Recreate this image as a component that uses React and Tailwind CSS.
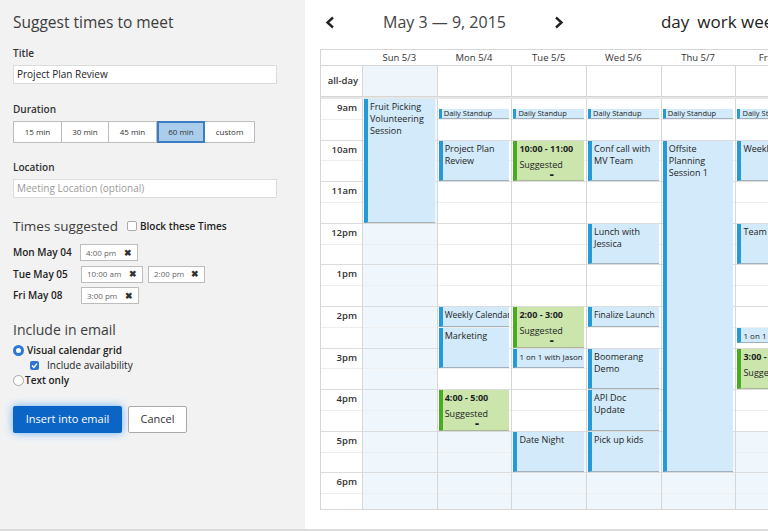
import React from 'react';

const HOUR = 41.6;
const days = ['Sun 5/3', 'Mon 5/4', 'Tue 5/5', 'Wed 5/6', 'Thu 5/7', 'Fri 5/8', 'Sat 5/9'];
const hours = ['9am', '10am', '11am', '12pm', '1pm', '2pm', '3pm', '4pm', '5pm', '6pm'];

const events = [
  { d: 0, s: 9, e: 12, t: 'Fruit Picking Volunteering Session' },
  { d: 1, s: 9.25, e: 9.5, t: 'Daily Standup', tiny: true },
  { d: 2, s: 9.25, e: 9.5, t: 'Daily Standup', tiny: true },
  { d: 3, s: 9.25, e: 9.5, t: 'Daily Standup', tiny: true },
  { d: 4, s: 9.25, e: 9.5, t: 'Daily Standup', tiny: true },
  { d: 5, s: 9.25, e: 9.5, t: 'Daily Standup', tiny: true },
  { d: 1, s: 10, e: 11, t: 'Project Plan Review' },
  { d: 1, s: 14, e: 14.5, t: 'Weekly Calendar', nowrap: true },
  { d: 1, s: 14.5, e: 15.5, t: 'Marketing' },
  { d: 1, s: 16, e: 17, g: '4:00 - 5:00' },
  { d: 2, s: 10, e: 11, g: '10:00 - 11:00' },
  { d: 2, s: 14, e: 15, g: '2:00 - 3:00' },
  { d: 2, s: 15, e: 15.5, t: '1 on 1 with Jason', nowrap: true, small: true },
  { d: 2, s: 17, e: 18, t: 'Date Night' },
  { d: 3, s: 10, e: 11, t: 'Conf call with MV Team' },
  { d: 3, s: 12, e: 13, t: 'Lunch with Jessica' },
  { d: 3, s: 14, e: 14.5, t: 'Finalize Launch', nowrap: true },
  { d: 3, s: 15, e: 16, t: 'Boomerang Demo' },
  { d: 3, s: 16, e: 17, t: 'API Doc Update' },
  { d: 3, s: 17, e: 18, t: 'Pick up kids' },
  { d: 4, s: 10, e: 18, t: 'Offsite Planning Session 1' },
  { d: 5, s: 10, e: 11, t: 'Weekly' },
  { d: 5, s: 12, e: 13, t: 'Team' },
  { d: 5, s: 14.5, e: 14.9, t: '1 on 1', nowrap: true, small: true },
  { d: 5, s: 15, e: 16, g: '3:00 - 4:00' },
];

function Chip({ label, w }) {
  return (
    <div
      className="h-[17px] bg-white border border-[#bdbdbd] flex items-center justify-between pl-[5px] pr-[5px]"
      style={{ width: w }}
    >
      <span className="text-[8px] text-[#666]">{label}</span>
      <span className="text-[9px] font-bold text-[#333]">✖</span>
    </div>
  );
}

function Event({ ev }) {
  const top = (ev.s - 9) * HOUR;
  const height = (ev.e - ev.s) * HOUR - 1;
  if (ev.g) {
    return (
      <div
        className="absolute left-[1px] right-[2px] bg-[#cbe5ad] border-l-[4px] border-[#46ad1f] border-b border-b-[#a6b898] pl-[2px] pt-[2px] text-[#1e1e1e] overflow-hidden"
        style={{ top, height }}
      >
        <div className="text-[9px] font-bold leading-[12px]">{ev.g}</div>
        <div className="text-[9px] leading-[11px] mt-[4px]">Suggested</div>
        <div className="mt-[1px] text-[7px] leading-[8px] text-center font-bold">=</div>
      </div>
    );
  }
  return (
    <div
      className={`absolute left-[1px] right-[2px] bg-[#d2eaf9] border-[#259ad8] border-b border-b-[#9fb0bc] text-[#1e1e1e] overflow-hidden ${
        ev.tiny ? 'border-l-[3px] pl-[2px]' : 'border-l-[4px] pl-[2px] pt-[2px]'
      }`}
      style={{ top, height }}
    >
      <div
        className={
          ev.tiny
            ? 'text-[7.5px] leading-[9px] whitespace-nowrap'
            : ev.small
            ? 'text-[8px] leading-[12px] whitespace-nowrap'
            : ev.nowrap
            ? 'text-[8.5px] leading-[12px] whitespace-nowrap'
            : 'text-[9px] leading-[12px] pr-[2px]'
        }
      >
        {ev.t}
      </div>
    </div>
  );
}

function Chevron({ dir }) {
  return (
    <svg width="10" height="13" viewBox="0 0 10 13" className="shrink-0">
      <polyline
        points={dir === 'left' ? '8,1.5 2.5,6.5 8,11.5' : '2,1.5 7.5,6.5 2,11.5'}
        fill="none"
        stroke="#222"
        strokeWidth="2.4"
      />
    </svg>
  );
}

export default function App() {
  return (
    <div className="w-[768px] h-[531px] flex overflow-hidden border-b-2 border-[#dcdcdc] font-['Open_Sans',sans-serif] text-[#333]">
      {/* left form */}
      <div className="w-[305px] shrink-0 bg-[#f2f2f2] px-[13px] pt-[12px]">
        <h1 className="text-[15.5px] leading-[20px] text-[#3c3c3c]">Suggest times to meet</h1>

        <div className="mt-[15px] text-[10px] leading-[12px] font-semibold">Title</div>
        <div className="mt-[6px] w-[264px] h-[19px] bg-white border border-[#dcdcdc] flex items-center px-[3px] text-[10px] text-[#222]">
          Project Plan Review
        </div>

        <div className="mt-[19px] text-[10px] leading-[12px] font-semibold">Duration</div>
        <div className="mt-[6px] flex h-[22px] text-[8px] text-[#333]">
          <div className="w-[49px] bg-white border border-[#bdbdbd] flex items-center justify-center">15 min</div>
          <div className="w-[47px] bg-white border-y border-r border-[#bdbdbd] flex items-center justify-center">30 min</div>
          <div className="w-[48px] bg-white border-y border-r border-[#bdbdbd] flex items-center justify-center">45 min</div>
          <div className="w-[48px] bg-[#a9cdeb] border-2 border-[#3b7dc2] flex items-center justify-center">60 min</div>
          <div className="w-[50px] bg-white border-y border-r border-[#bdbdbd] flex items-center justify-center">custom</div>
        </div>

        <div className="mt-[18px] text-[10px] leading-[12px] font-semibold">Location</div>
        <div className="mt-[6px] w-[264px] h-[19px] bg-white border border-[#dcdcdc] flex items-center px-[3px] text-[10px] text-[#9a9a9a]">
          Meeting Location (optional)
        </div>

        <div className="mt-[19px] flex items-center h-[18px]">
          <span className="text-[13.5px] leading-[18px] text-[#3c3c3c]">Times suggested</span>
          <span className="ml-[9px] w-[10px] h-[10px] bg-white border border-[#aaa] rounded-[2px]"></span>
          <span className="ml-[3px] text-[10px] font-semibold text-[#222]">Block these Times</span>
        </div>

        <div className="mt-[9px] flex flex-col gap-[4.5px]">
          <div className="flex items-center">
            <span className="w-[67px] text-[10px] font-semibold text-[#222]">Mon May 04</span>
            <Chip label="4:00 pm" w={58} />
          </div>
          <div className="flex items-center">
            <span className="w-[68px] text-[10px] font-semibold text-[#222]">Tue May 05</span>
            <Chip label="10:00 am" w={62} />
            <div className="w-[5px]"></div>
            <Chip label="2:00 pm" w={57} />
          </div>
          <div className="flex items-center">
            <span className="w-[68px] text-[10px] font-semibold text-[#222]">Fri May 08</span>
            <Chip label="3:00 pm" w={58} />
          </div>
        </div>

        <div className="mt-[17px] text-[14px] leading-[17px] text-[#3c3c3c]">Include in email</div>
        <div className="mt-[6px] flex flex-col gap-[2px] text-[10px] text-[#222]">
          <div className="flex items-center h-[13px]">
            <span className="w-[11px] h-[11px] rounded-full border-[3px] border-[#2a7ad5] bg-white"></span>
            <span className="ml-[3px] font-semibold">Visual calendar grid</span>
          </div>
          <div className="flex items-center h-[13px] pl-[17px]">
            <span className="w-[9px] h-[9px] rounded-[2px] bg-[#2f74d0] flex items-center justify-center">
              <svg width="7" height="7" viewBox="0 0 7 7">
                <polyline points="1,3.6 2.8,5.4 6,1.6" fill="none" stroke="white" strokeWidth="1.4" />
              </svg>
            </span>
            <span className="ml-[8px]">Include availability</span>
          </div>
          <div className="flex items-center h-[13px]">
            <span className="w-[11px] h-[11px] rounded-full border border-[#aaa] bg-white"></span>
            <span className="ml-[1px] font-semibold">Text only</span>
          </div>
        </div>

        <div className="mt-[19px] flex gap-[6px]">
          <button className="w-[109px] h-[27px] bg-[#0b65c6] text-white text-[11px] rounded-[2px] shadow-[0_0_9px_rgba(70,160,255,0.8)]">
            Insert into email
          </button>
          <button className="w-[59px] h-[27px] bg-white border border-[#aaa] text-[#333] text-[11px] rounded-[2px]">
            Cancel
          </button>
        </div>
      </div>

      {/* calendar */}
      <div className="flex-1 bg-white overflow-hidden pl-[15px]">
        <div className="h-[44px] flex items-center whitespace-nowrap text-[#333]">
          <span className="ml-[5px]">
            <Chevron dir="left" />
          </span>
          <span className="ml-[48px] text-[16px] text-[#444]">May 3 — 9, 2015</span>
          <span className="ml-[48px]">
            <Chevron dir="right" />
          </span>
          <span className="ml-[97px] text-[17px] text-[#222]">day</span>
          <span className="ml-[8px] text-[17px] text-[#222]">work week</span>
        </div>

        <div className="mt-[5px] w-[565px] border border-[#d6d6d6]">
          <div className="grid grid-cols-[41px_repeat(7,74.7px)] h-[15px] text-[9.5px] leading-[15px] text-[#333]">
            <div></div>
            {days.map((d) => (
              <div key={d} className="text-center">{d}</div>
            ))}
          </div>
          <div className="grid grid-cols-[41px_repeat(7,74.7px)] h-[31px] border-t border-[#d6d6d6]">
            <div className="text-[9.5px] font-semibold text-right pr-[4px] flex items-center justify-end">all-day</div>
            {days.map((d, i) => (
              <div key={d} className={`border-l border-[#d6d6d6] ${i === 0 || i === 6 ? 'bg-[#eef6fc]' : ''}`}></div>
            ))}
          </div>
          <div className="h-[3px] bg-[#e6e6e6] border-t border-[#d6d6d6]"></div>
          <div className="grid grid-cols-[41px_repeat(7,74.7px)] h-[410px] overflow-hidden">
            <div>
              {hours.map((h) => (
                <div key={h}>
                  <div className="h-[20.8px] border-b border-[#ededed] text-[9.5px] font-semibold text-right pr-[5px] pt-[3px] leading-[12px]">
                    {h}
                  </div>
                  <div className="h-[20.8px] border-b border-[#dcdcdc]"></div>
                </div>
              ))}
            </div>
            {days.map((d, di) => (
              <div key={d} className="relative border-l border-[#d6d6d6]">
                {Array.from({ length: 20 }).map((_, si) => (
                  <div
                    key={si}
                    className={`h-[20.8px] border-b ${si % 2 === 0 ? 'border-[#efefef]' : 'border-[#dcdcdc]'} ${
                      di === 0 || di === 6 || si >= 16 ? 'bg-[#f0f7fc]' : ''
                    }`}
                  ></div>
                ))}
                {events
                  .filter((ev) => ev.d === di)
                  .map((ev, k) => (
                    <Event key={k} ev={ev} />
                  ))}
              </div>
            ))}
          </div>
        </div>
      </div>
    </div>
  );
}
